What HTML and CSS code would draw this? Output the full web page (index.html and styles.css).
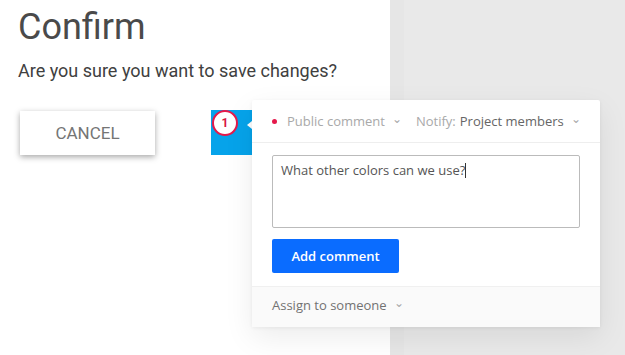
FILE: index.html
```html
<!DOCTYPE html>
<html lang="en">

<head>
  <meta charset="UTF-8">
  <title>Confirm</title>
  <meta name="viewport" content="width=device-width, initial-scale=1.0">
  <link rel="stylesheet" href="styles.css">
</head>

<body>
  <div class="screen">
    <!-- Dialog side -->
    <div class="dialog">
      <h1>Confirm</h1>
      <p class="message">Are you sure you want to save changes?</p>
      <div class="actions">
        <button class="cancel-btn">CANCEL</button>
      </div>
    </div>

    <div class="backdrop"></div>

    <!-- Comment marker -->
    <div class="marker">
      <span class="marker-badge">1</span>
    </div>

    <!-- Comment popover -->
    <div class="comment-card">
      <div class="card-header">
        <span class="dot"></span>
        <span class="select muted">Public comment <span class="chev">&#8964;</span></span>
        <span class="select notify"><span class="muted">Notify:</span> Project members <span class="chev">&#8964;</span></span>
      </div>
      <div class="card-body">
        <div class="comment-box">What other colors can we use?<span class="caret"></span></div>
        <button class="add-btn">Add comment</button>
      </div>
      <div class="card-footer">
        Assign to someone <span class="chev">&#8964;</span>
      </div>
    </div>
  </div>
</body>

</html>
```

FILE: styles.css
```css
/* General Styles */
body {
  margin: 0;
  font-family: Roboto, 'Liberation Sans', sans-serif;
  background-color: #ffffff;
}

.screen {
  position: relative;
  display: flex;
  width: 625px;
  height: 355px;
  overflow: hidden;
}

/* Dialog */
.dialog {
  width: 390px;
  flex-shrink: 0;
  padding: 5px 0 0 18px;
  box-sizing: border-box;
  background: #ffffff;
}

h1 {
  margin: 0;
  font-size: 36px;
  font-weight: 400;
  color: #4a4a4a;
  line-height: 44px;
}

.message {
  margin: 11px 0 0;
  font-size: 18px;
  color: #404040;
  line-height: 22px;
}

.actions {
  margin-top: 29px;
  padding-left: 2px;
}

.cancel-btn {
  width: 135px;
  height: 44px;
  border: none;
  background: #ffffff;
  font-family: Roboto, 'Liberation Sans', sans-serif;
  font-size: 17px;
  color: #757575;
  box-shadow: 0 2px 6px rgba(0, 0, 0, 0.35);
}

.backdrop {
  flex: 1;
  background: #e9e9e9;
  border-left: 14px solid #e6e6e6;
}

/* Marker */
.marker {
  position: absolute;
  left: 211px;
  top: 110px;
  width: 41px;
  height: 45px;
  background: #06a3ea;
}

.marker-badge {
  position: absolute;
  left: 1px;
  top: 0;
  width: 22px;
  height: 22px;
  border: 2px solid #e5194b;
  border-radius: 50%;
  background: #ffffff;
  color: #d8163f;
  font-size: 12px;
  font-weight: 700;
  display: flex;
  align-items: center;
  justify-content: center;
}

.marker::after {
  content: '';
  position: absolute;
  right: 0;
  top: 11px;
  border-top: 4px solid transparent;
  border-bottom: 4px solid transparent;
  border-right: 5px solid #ffffff;
}

/* Comment card */
.comment-card {
  position: absolute;
  left: 252px;
  top: 100px;
  width: 348px;
  background: #ffffff;
  border-radius: 2px;
  box-shadow: 0 10px 30px rgba(0, 0, 0, 0.08), 0 1px 4px rgba(0, 0, 0, 0.06);
  font-family: 'Open Sans', 'Liberation Sans', sans-serif;
}

.card-header {
  display: flex;
  align-items: center;
  height: 42px;
  padding-left: 20px;
  border-bottom: 1px solid #eeeeee;
  font-size: 13px;
  color: #666666;
}

.dot {
  width: 5px;
  height: 5px;
  border-radius: 50%;
  background: #e5194b;
  margin-right: 10px;
}

.muted {
  color: #a9a9a9;
}

.select {
  display: flex;
  align-items: center;
  gap: 4px;
}

.notify {
  margin-left: 14px;
}

.chev {
  font-size: 12px;
  color: #a9a9a9;
  position: relative;
  top: -3px;
  margin-left: 3px;
}

.card-body {
  padding: 12px 20px 13px;
}

.comment-box {
  height: 73px;
  border: 1px solid #bbbbbb;
  border-radius: 2px;
  box-sizing: border-box;
  padding: 5px 8px;
  font-size: 13px;
  color: #555555;
}

.caret {
  display: inline-block;
  width: 1px;
  height: 15px;
  background: #333333;
  vertical-align: -3px;
}

.add-btn {
  margin-top: 11px;
  width: 127px;
  height: 34px;
  border: none;
  border-radius: 2px;
  background: #0a6cff;
  color: #ffffff;
  font-family: 'Open Sans', 'Liberation Sans', sans-serif;
  font-size: 13px;
  font-weight: 600;
}

.card-footer {
  display: flex;
  align-items: center;
  height: 41px;
  padding: 0 0 4px 20px;
  box-sizing: border-box;
  background: #fafafa;
  border-top: 1px solid #f0f0f0;
  font-size: 13px;
  color: #727272;
}

.card-footer .chev {
  margin-left: 7px;
}
```
